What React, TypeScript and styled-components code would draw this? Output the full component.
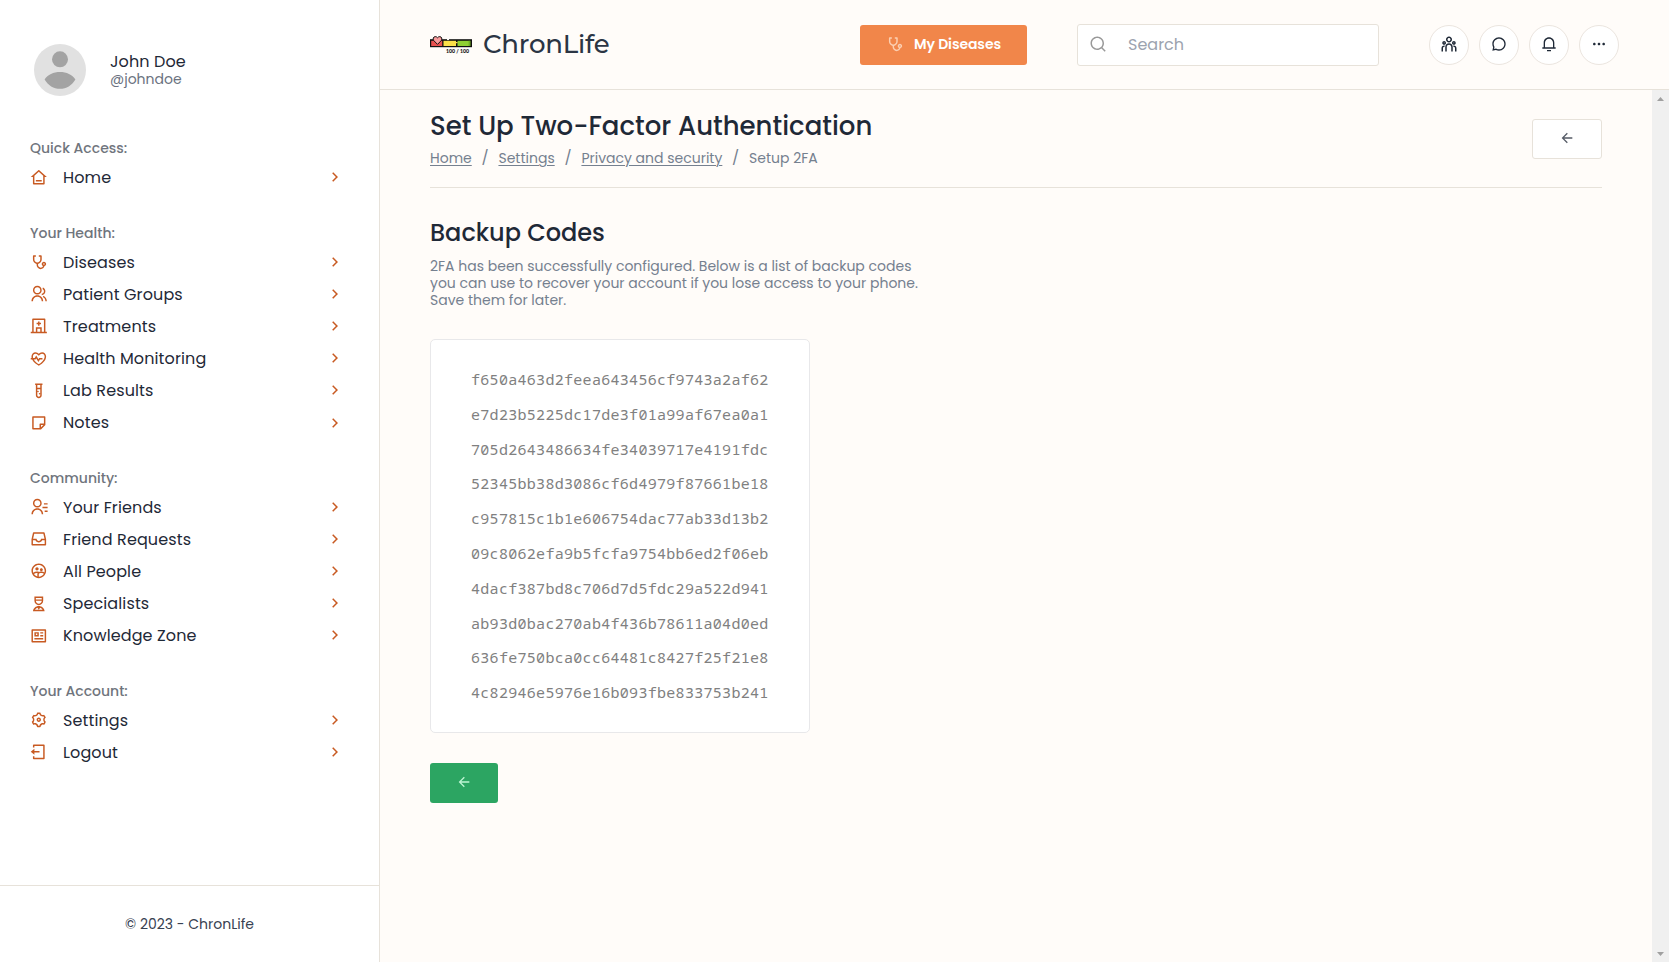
import React from 'react';
import styled, { createGlobalStyle } from 'styled-components';
import type { IconType } from 'react-icons';
import {
  RiHome3Line, RiStethoscopeLine, RiGroupLine, RiHospitalLine, RiHeartPulseLine, RiTestTubeLine,
  RiStickyNoteLine, RiContactsLine, RiInbox2Line, RiGroup2Line, RiNurseLine, RiProfileLine,
  RiSettings3Line, RiLogoutBoxLine, RiArrowRightSLine, RiArrowLeftLine, RiTeamLine, RiChat3Line,
  RiNotification3Line, RiMoreFill, RiSearchLine,
} from 'react-icons/ri';

const line = '#e7e2da';

const GlobalStyle = createGlobalStyle`
  * { box-sizing: border-box; }
  body {
    margin: 0;
    background: #fffcf9;
    color: #1f2937;
    font-family: Poppins, Inter, "Liberation Sans", sans-serif;
    font-size: 16px;
  }
`;

const Page = styled.div`
  display: flex;
  height: 962px;
  overflow: hidden;
`;

/* Sidebar */

const Sidebar = styled.aside`
  width: 380px;
  flex: none;
  display: flex;
  flex-direction: column;
  background: #fff;
  border-right: 1px solid ${line};
`;

const Profile = styled.div`
  display: flex;
  align-items: flex-start;
  gap: 24px;
  height: 135.2px;
  padding: 44px 34px 0;
`;

const Avatar = styled.svg`
  width: 52px;
  height: 52px;
`;

const ProfileText = styled.div`
  padding-top: 8px;
`;

const ProfileName = styled.div`
  line-height: 19px;
  letter-spacing: 0.1px;
`;

const ProfileHandle = styled.div`
  font-size: 14px;
  line-height: 16px;
  color: #6b7280;
`;

const Nav = styled.nav`
  flex: 1;
`;

const NavGroup = styled.section`
  padding: 0 35px 26.3px 30px;
`;

const NavLabel = styled.h3`
  margin: 0;
  font-size: 14px;
  font-weight: 500;
  line-height: 26.2px;
  color: #70757d;
`;

const NavRow = styled.a`
  display: flex;
  align-items: center;
  height: 32.1px;
  color: #c85a22;
  svg:first-child { width: 17.6px; height: 17.6px; }
  svg:last-child { width: 18px; height: 18px; }
`;

const NavText = styled.span`
  flex: 1;
  padding-left: 15.4px;
  letter-spacing: 0.12px;
  color: #1f2937;
`;

const Footer = styled.footer`
  display: flex;
  align-items: center;
  justify-content: center;
  height: 77px;
  border-top: 1px solid ${line};
  font-size: 14px;
  color: #374151;
`;

/* Header */

const Main = styled.main`
  flex: 1;
  display: flex;
  flex-direction: column;
  min-width: 0;
`;

const Header = styled.header`
  display: flex;
  align-items: center;
  height: 90px;
  padding: 0 50px;
  border-bottom: 1px solid ${line};
`;

const Brand = styled.div`
  display: flex;
  align-items: center;
  gap: 11px;
  margin-right: auto;
`;

const BrandName = styled.span`
  padding-bottom: 1px;
  font-family: Montserrat, Inter, sans-serif;
  font-size: 26px;
  font-weight: 500;
  line-height: 30px;
  letter-spacing: -0.22px;
  color: #2b3544;
`;

const DiseasesButton = styled.button`
  display: flex;
  align-items: center;
  width: 167px;
  height: 40px;
  padding: 0 0 0 26px;
  border: 0;
  border-radius: 3px;
  background: #f1864a;
  color: #fff;
  font: 600 14px Poppins, Inter, sans-serif;
  letter-spacing: -0.1px;
  svg { width: 17.6px; height: 17.6px; margin: 0 10.5px 1px 0; color: #fbcfb2; }
`;

const SearchBox = styled.div`
  display: flex;
  align-items: center;
  width: 302px;
  height: 42px;
  margin: 0 50px;
  padding-left: 11px;
  background: #fff;
  border: 1px solid ${line};
  border-radius: 3px;
  color: #9ca3af;
  svg { width: 18px; height: 18px; margin: 0 21px 1px 0; color: #999; }
`;

const Actions = styled.div`
  display: flex;
  gap: 10px;
`;

const RoundButton = styled.button<{ $icon: number }>`
  display: flex;
  align-items: center;
  justify-content: center;
  width: 40px;
  height: 40px;
  padding: 0 0 1px;
  border: 1px solid #ebe5df;
  border-radius: 50%;
  background: #fff;
  color: #1f2937;
  svg { width: ${(p) => p.$icon}px; height: ${(p) => p.$icon}px; }
`;

/* Content */

const Body = styled.div`
  flex: 1;
  display: flex;
  min-height: 0;
`;

const Content = styled.div`
  flex: 1;
  padding: 0 50px;
`;

const TitleBar = styled.div`
  display: flex;
  justify-content: space-between;
  height: 98px;
  padding-top: 20px;
  border-bottom: 1px solid ${line};
`;

const Title = styled.h1`
  margin: 0;
  font-size: 26px;
  font-weight: 500;
  line-height: 33px;
`;

const Crumbs = styled.div`
  display: flex;
  margin-top: 5px;
  font-size: 14px;
  line-height: 20px;
  color: #75808f;
`;

const Crumb = styled.span<{ $link?: boolean }>`
  white-space: nowrap;
  text-decoration: ${(p) => (p.$link ? 'underline' : 'none')};
  text-decoration-thickness: 1px;
  text-underline-offset: 2px;
`;

const Slash = styled.span`
  width: 26.7px;
  text-align: center;
  font-size: 15px;
`;

const BackButton = styled.button<{ $primary?: boolean }>`
  display: flex;
  align-items: center;
  justify-content: center;
  width: ${(p) => (p.$primary ? 68 : 70)}px;
  height: 40px;
  margin-top: ${(p) => (p.$primary ? 30 : 9)}px;
  padding: 0;
  border: ${(p) => (p.$primary ? '0' : `1px solid ${line}`)};
  border-radius: 3px;
  background: ${(p) => (p.$primary ? '#2ca562' : '#fff')};
  color: ${(p) => (p.$primary ? '#bff5d4' : '#555b66')};
  svg { width: 16px; height: 16px; margin-top: -2px; }
`;

const SectionTitle = styled.h2`
  margin: 29px 0 0;
  font-size: 24px;
  font-weight: 500;
  line-height: 32px;
`;

const Intro = styled.p`
  width: 500px;
  margin: 9px 0 30px;
  font-size: 14px;
  line-height: 17px;
  color: #75808f;
`;

const CodeCard = styled.div`
  width: 380px;
  height: 394px;
  padding: 22px 40px;
  border: 1px solid #e8e8ea;
  border-radius: 5px;
  background: #fff;
`;

const Code = styled.div`
  font-family: "Noto Sans Mono", "Liberation Mono", monospace;
  font-size: 15px;
  line-height: 34.8px;
  letter-spacing: 0.3px;
  color: #808080;
`;

const Scrollbar = styled.div`
  display: flex;
  flex-direction: column;
  justify-content: space-between;
  align-items: center;
  width: 17px;
  padding: 7px 0 6px;
  background: #f0f0f0;
`;

const Caret = styled.svg`
  width: 7px;
  height: 4px;
  fill: #a0a0a0;
`;

const groups: { label: string; items: [IconType, string][] }[] = [
  { label: 'Quick Access:', items: [[RiHome3Line, 'Home']] },
  {
    label: 'Your Health:',
    items: [
      [RiStethoscopeLine, 'Diseases'],
      [RiGroupLine, 'Patient Groups'],
      [RiHospitalLine, 'Treatments'],
      [RiHeartPulseLine, 'Health Monitoring'],
      [RiTestTubeLine, 'Lab Results'],
      [RiStickyNoteLine, 'Notes'],
    ],
  },
  {
    label: 'Community:',
    items: [
      [RiContactsLine, 'Your Friends'],
      [RiInbox2Line, 'Friend Requests'],
      [RiGroup2Line, 'All People'],
      [RiNurseLine, 'Specialists'],
      [RiProfileLine, 'Knowledge Zone'],
    ],
  },
  {
    label: 'Your Account:',
    items: [
      [RiSettings3Line, 'Settings'],
      [RiLogoutBoxLine, 'Logout'],
    ],
  },
];

const codes = [
  'f650a463d2feea643456cf9743a2af62',
  'e7d23b5225dc17de3f01a99af67ea0a1',
  '705d2643486634fe34039717e4191fdc',
  '52345bb38d3086cf6d4979f87661be18',
  'c957815c1b1e606754dac77ab33d13b2',
  '09c8062efa9b5fcfa9754bb6ed2f06eb',
  '4dacf387bd8c706d7d5fdc29a522d941',
  'ab93d0bac270ab4f436b78611a04d0ed',
  '636fe750bca0cc64481c8427f25f21e8',
  '4c82946e5976e16b093fbe833753b241',
];

const HealthBarLogo = () => (
  <svg width="42" height="18" viewBox="0 0 42 18">
    <rect x="0" y="3.2" width="42" height="8" fill="#111" />
    <rect x="1.2" y="4.8" width="11" height="5.2" fill="#e8504f" />
    <rect x="13.5" y="4.8" width="12.5" height="5.2" fill="#fbe04a" />
    <rect x="27.5" y="4.8" width="12.8" height="5.2" fill="#8fd032" />
    <rect x="38.6" y="4.8" width="1.7" height="5.2" fill="#6fae22" />
    <rect x="17" y="2.8" width="2" height="1.3" fill="#fffcf9" />
    <rect x="26" y="6" width="1.5" height="1.2" fill="#fbe04a" />
    <path
      d="M7.5 8.4 3.7 4.5C2.5 2.9 3.4.7 5.2.6c1 0 1.8.5 2.3 1.2C8 1.1 8.8.6 9.8.6c1.800.1 2.700 2.300 1.500 3.900z"
      fill="#f99a9b" stroke="#111" strokeWidth="1"
    />
    <text x="16" y="17" fontFamily="Lato, sans-serif" fontWeight="900" fontSize="5.2" textLength="23" fill="#111">100 / 100</text>
  </svg>
);

export default function App() {
  return (
    <Page>
      <GlobalStyle />
      <Sidebar>
        <Profile>
          <Avatar viewBox="0 0 52 52">
            <circle cx="26" cy="26" r="26" fill="#e1e1e1" />
            <circle cx="26" cy="15.3" r="8" fill="#a3a3a3" />
            <path d="M10.6 35.5c3-5 9-7.5 15.4-7.5s12.400 2.500 15.400 7.500c-3.500 6-9 9.300-15.400 9.300s-11.900-3.300-15.400-9.300z" fill="#a3a3a3" />
          </Avatar>
          <ProfileText>
            <ProfileName>John Doe</ProfileName>
            <ProfileHandle>@johndoe</ProfileHandle>
          </ProfileText>
        </Profile>
        <Nav>
          {groups.map((g) => (
            <NavGroup key={g.label}>
              <NavLabel>{g.label}</NavLabel>
              {g.items.map(([Icon, text]) => (
                <NavRow key={text}>
                  <Icon />
                  <NavText>{text}</NavText>
                  <RiArrowRightSLine />
                </NavRow>
              ))}
            </NavGroup>
          ))}
        </Nav>
        <Footer>© 2023 - ChronLife</Footer>
      </Sidebar>
      <Main>
        <Header>
          <Brand>
            <HealthBarLogo />
            <BrandName>ChronLife</BrandName>
          </Brand>
          <DiseasesButton>
            <RiStethoscopeLine />
            <span>My Diseases</span>
          </DiseasesButton>
          <SearchBox>
            <RiSearchLine />
            <span>Search</span>
          </SearchBox>
          <Actions>
            <RoundButton $icon={18}><RiTeamLine /></RoundButton>
            <RoundButton $icon={16}><RiChat3Line /></RoundButton>
            <RoundButton $icon={16}><RiNotification3Line /></RoundButton>
            <RoundButton $icon={16}><RiMoreFill /></RoundButton>
          </Actions>
        </Header>
        <Body>
          <Content>
            <TitleBar>
              <div>
                <Title>Set Up Two-Factor Authentication</Title>
                <Crumbs>
                  <Crumb $link>Home</Crumb>
                  <Slash>/</Slash>
                  <Crumb $link>Settings</Crumb>
                  <Slash>/</Slash>
                  <Crumb $link>Privacy and security</Crumb>
                  <Slash>/</Slash>
                  <Crumb>Setup 2FA</Crumb>
                </Crumbs>
              </div>
              <BackButton><RiArrowLeftLine /></BackButton>
            </TitleBar>
            <SectionTitle>Backup Codes</SectionTitle>
            <Intro>
              2FA has been successfully configured. Below is a list of backup codes
              you can use to recover your account if you lose access to your phone.
              Save them for later.
            </Intro>
            <CodeCard>
              {codes.map((c) => <Code key={c}>{c}</Code>)}
            </CodeCard>
            <BackButton $primary><RiArrowLeftLine /></BackButton>
          </Content>
          <Scrollbar>
            <Caret viewBox="0 0 7 4"><path d="M0 4 3.5 0 7 4z" /></Caret>
            <Caret viewBox="0 0 7 4"><path d="M0 0 3.5 4 7 0z" /></Caret>
          </Scrollbar>
        </Body>
      </Main>
    </Page>
  );
}
